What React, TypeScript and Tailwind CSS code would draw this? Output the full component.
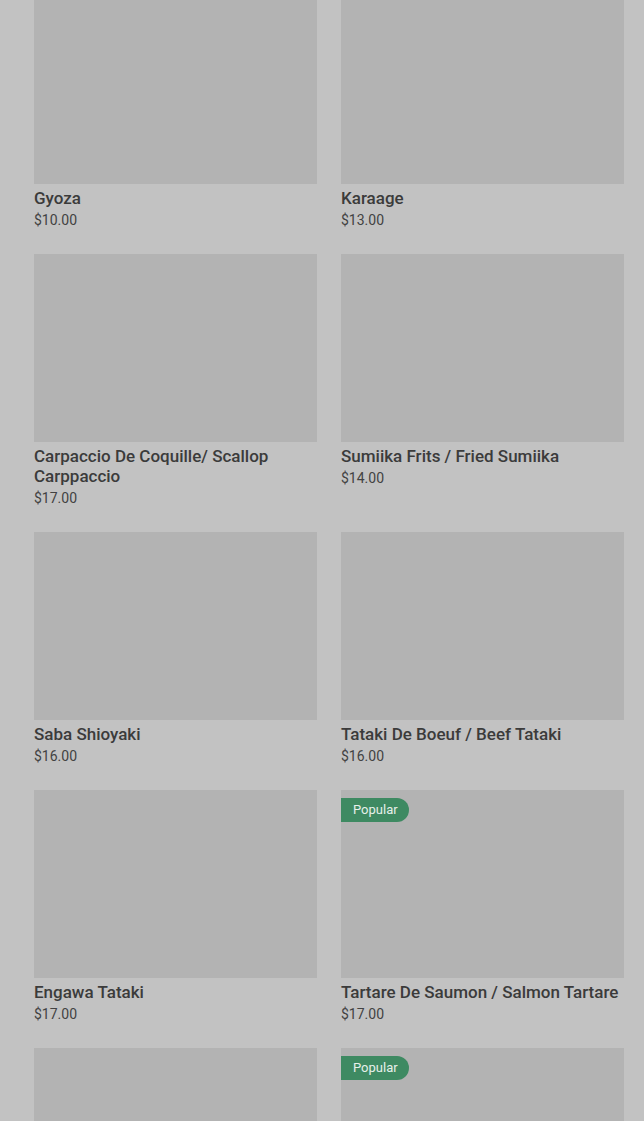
import React from "react";

type Item = { name?: string; price?: string; popular?: boolean };

const items: Item[] = [
  { name: "Gyoza", price: "$10.00" },
  { name: "Karaage", price: "$13.00" },
  { name: "Carpaccio De Coquille/ Scallop Carppaccio", price: "$17.00" },
  { name: "Sumiika Frits / Fried Sumiika", price: "$14.00" },
  { name: "Saba Shioyaki", price: "$16.00" },
  { name: "Tataki De Boeuf / Beef Tataki", price: "$16.00" },
  { name: "Engawa Tataki", price: "$17.00" },
  { name: "Tartare De Saumon / Salmon Tartare", price: "$17.00", popular: true },
  {},
  { popular: true },
];

function Card({ item }: { item: Item }) {
  return (
    <div className="flex flex-col">
      <div className="relative h-[188px] bg-[#b3b3b3]">
        {item.popular && (
          <span className="absolute left-0 top-[8px] flex h-[24px] items-center rounded-r-full bg-[#3e8a62] pl-[12px] pr-[11px] text-[13px] text-[#e6f0ea]">
            Popular
          </span>
        )}
      </div>
      {item.name && (
        <>
          <div className="mt-1 text-[17px] font-medium leading-[20px] text-[#3b3b3b]">
            {item.name}
          </div>
          <div className="mt-[2px] text-[14px] leading-[20px] text-[#424242]">{item.price}</div>
        </>
      )}
    </div>
  );
}

export default function App() {
  return (
    <div
      className="h-[1121px] overflow-hidden bg-[#c2c2c2] pl-[34px] pr-[20px]"
      style={{ fontFamily: "Roboto, 'Noto Sans', sans-serif" }}
    >
      <div className="mt-[-4px] grid grid-cols-2 gap-x-[24px] gap-y-[24px]">
        {items.map((it, i) => (
          <Card key={i} item={it} />
        ))}
      </div>
    </div>
  );
}
